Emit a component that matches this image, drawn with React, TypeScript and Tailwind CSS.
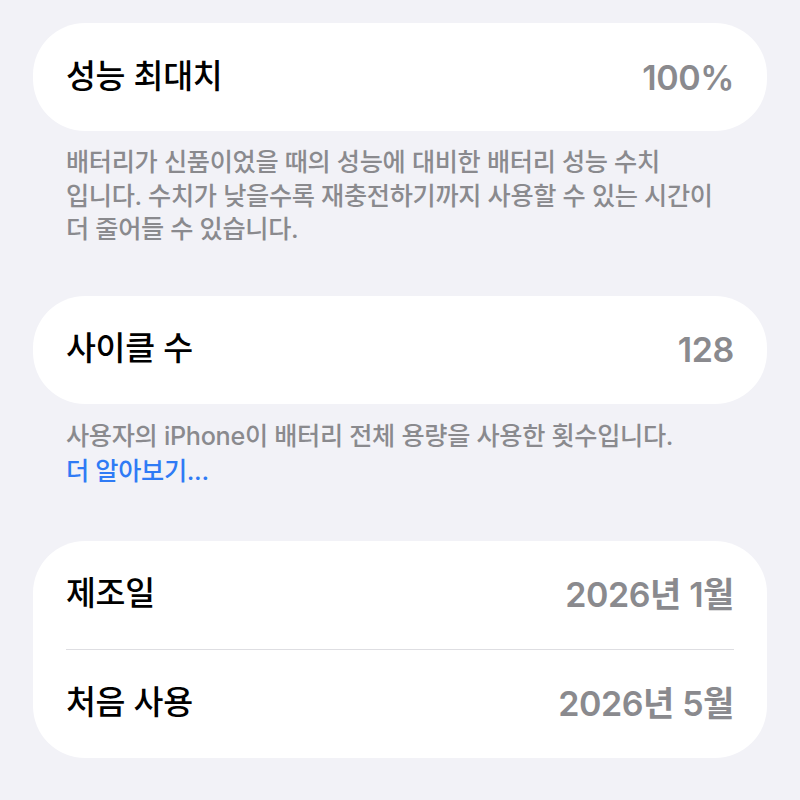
import React from 'react';

const FONT = { fontFamily: '"Inter", "Noto Sans CJK KR", sans-serif' };

const Row = ({ label, value }: { label: string; value: string }) => (
  <div className="flex h-[108px] items-center justify-between">
    <span className="text-[32.5px] font-medium text-black tracking-[-0.3px]">{label}</span>
    <span className="text-[34px] font-semibold text-[#8a8a8e] tracking-[-0.4px]">{value}</span>
  </div>
);

export default function App() {
  return (
    <div className="min-h-[800px] w-[800px] bg-[#f2f2f7] px-[33px] pt-[23px]" style={FONT}>
      {/* Peak performance */}
      <div className="rounded-[52px] bg-white px-[33px]">
        <Row label="성능 최대치" value="100%" />
      </div>
      <p className="mt-[15px] px-[33px] text-[25.2px] font-medium leading-[33.5px] text-[#8a8a8e] tracking-[-0.3px]">
        배터리가 신품이었을 때의 성능에 대비한 배터리 성능 수치
        <br />
        입니다. 수치가 낮을수록 재충전하기까지 사용할 수 있는 시간이
        <br />
        더 줄어들 수 있습니다.
      </p>

      {/* Cycle count */}
      <div className="mt-[49px] rounded-[52px] bg-white px-[33px]">
        <Row label="사이클 수" value="128" />
      </div>
      <p className="mt-[15px] px-[33px] text-[25.2px] font-medium leading-[35px] text-[#8a8a8e] tracking-[-0.3px]">
        사용자의 iPhone이 배터리 전체 용량을 사용한 횟수입니다.
        <br />
        <span className="text-[#2f7bf5]">더 알아보기...</span>
      </p>

      {/* Dates */}
      <div className="mt-[52px] rounded-[52px] bg-white px-[33px]">
        <Row label="제조일" value="2026년 1월" />
        <div className="h-px bg-[#dedee2]" />
        <Row label="처음 사용" value="2026년 5월" />
      </div>
    </div>
  );
}
